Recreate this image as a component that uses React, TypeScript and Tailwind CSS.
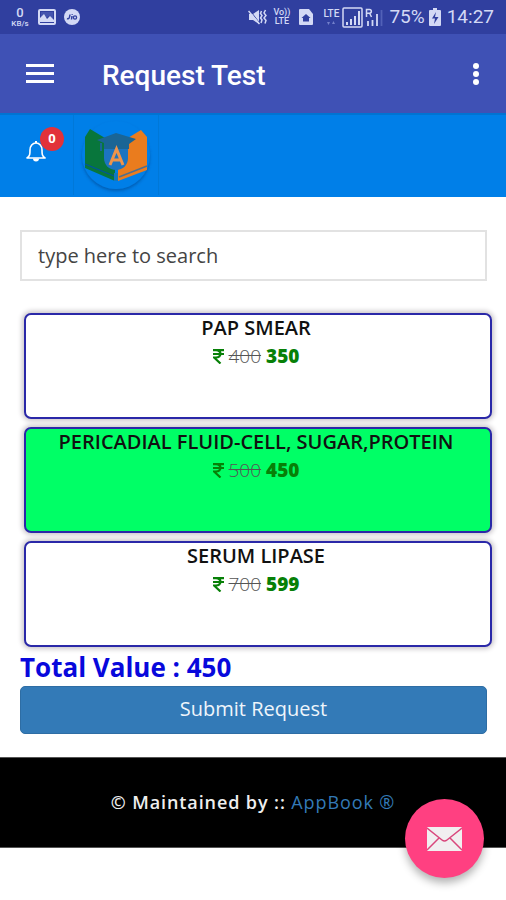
type Test = { name: string; price: number; offer: number; selected?: boolean };

const tests: Test[] = [
  { name: "PAP SMEAR", price: 400, offer: 350 },
  { name: "PERICADIAL FLUID-CELL, SUGAR,PROTEIN", price: 500, offer: 450, selected: true },
  { name: "SERUM LIPASE", price: 700, offer: 599 },
];

function StatusBar() {
  return (
    <div className="flex h-[34px] items-center justify-between bg-[#303f9f] pr-3 pl-2.5 font-['Roboto',sans-serif] text-[#d3d9f5]">
      <div className="flex items-center gap-2">
        <div className="flex w-5 flex-col items-center font-medium">
          <span className="text-[13px] leading-[14px]">0</span>
          <span className="text-[8px] leading-[8px]">KB/s</span>
        </div>
        <svg className="h-4 w-[18px]" viewBox="0 0 18 16" aria-hidden="true">
          <rect x="1" y="1" width="16" height="14" rx="1" fill="none" stroke="currentColor" strokeWidth="2" />
          <path d="M3 3h12v7l-4-3-3 2-2-3-3 6z" fill="#4454ae" />
          <path d="M2 13V9l4-4 3 5 3-3 4 4v2z" fill="currentColor" />
        </svg>
        <svg className="size-4" viewBox="0 0 16 16" aria-hidden="true">
          <circle cx="8" cy="8" r="8" fill="currentColor" />
          <path d="M3 9.500c2 1 2.500-.5 3-4M8 7l-.5 3.500M8.200 5v.8" fill="none" stroke="#303f9f" strokeWidth="1.500" />
          <circle cx="11" cy="8.500" r="1.600" fill="none" stroke="#303f9f" strokeWidth="1.300" />
        </svg>
      </div>
      <div className="flex items-center">
        <svg className="h-4 w-[19px]" viewBox="0 0 19 16" aria-hidden="true">
          <path d="M1 5h4l6-4v14l-6-4H1z" fill="currentColor" />
          <path d="M2 1.500l10 13" stroke="#303f9f" strokeWidth="1" />
          <path d="M.5 2l11 13" stroke="currentColor" strokeWidth="1.500" />
          <path d="M13.500 2l-1 2.500 1.500 2-1.500 2.500 1.500 2-1 3M17.500 1l-1.500 3 2 2.500-2 2.500 2 2.500-1 3" fill="none" stroke="currentColor" strokeWidth="1.500" />
        </svg>
        <div className="ml-1.5 flex w-[17px] flex-col items-center text-[9px] leading-[9px] font-medium">
          <span>Vo))</span>
          <span>LTE</span>
        </div>
        <svg className="ml-2 h-4 w-4" viewBox="0 0 16 16" aria-hidden="true">
          <path d="M2 0h9l4 5v10a1 1 0 0 1-1 1H2a1 1 0 0 1-1-1V1a1 1 0 0 1 1-1z" fill="currentColor" />
          <path d="M8 5l4.500 4H11v3.500H5V9H3.500z" fill="#303f9f" />
        </svg>
        <div className="ml-2 flex w-[18px] flex-col items-center font-medium">
          <span className="text-[10px] leading-3">LTE</span>
          <svg className="h-1.5 w-2.5" viewBox="0 0 10 6" aria-hidden="true">
            <path d="M1 2h3L2.500 5zM6 4h3L7.500 1z" fill="#7380cb" />
          </svg>
        </div>
        <svg className="ml-0.5 h-[21px] w-[21px]" viewBox="0 0 21 21" aria-hidden="true">
          <rect x="1" y="1" width="19" height="19" rx="1" fill="none" stroke="currentColor" strokeWidth="1.500" />
          <path d="M5 18v-3M9 18v-6M13 18V9M17 18V4" stroke="currentColor" strokeWidth="2" />
        </svg>
        <svg className="ml-0.5 h-[19px] w-[18px]" viewBox="0 0 18 19" aria-hidden="true">
          <path d="M1.500 9V1.500h3a1.800 1.800 0 0 1 0 3.700h-3M4.500 5l2 4" fill="none" stroke="currentColor" strokeWidth="1.500" />
          <path d="M3 18v-5M7.500 18v-6M12 18V6" stroke="currentColor" strokeWidth="1.800" />
          <path d="M16.500 18V2" stroke="#5261b8" strokeWidth="1.800" />
        </svg>
        <span className="ml-1.5 text-[19px] leading-6">75%</span>
        <svg className="ml-1 h-[18px] w-3" viewBox="0 0 12 18" aria-hidden="true">
          <path d="M4 0h4v2h3a1 1 0 0 1 1 1v14a1 1 0 0 1-1 1H1a1 1 0 0 1-1-1V3a1 1 0 0 1 1-1h3z" fill="currentColor" />
          <path d="M7 4L3 10.500h3L5 16l4.500-7H6z" fill="#303f9f" />
        </svg>
        <span className="ml-1.5 text-[19px] leading-6">14:27</span>
      </div>
    </div>
  );
}

function AppBar() {
  return (
    <header className="flex h-[79px] items-center bg-[#3f51b5] pt-1 pr-4 pl-[26px] text-white">
      <button type="button" aria-label="Open menu" className="flex w-[28px] flex-col gap-[5px] pb-1">
        <span className="h-[3px] w-full bg-white" />
        <span className="h-[3px] w-full bg-white" />
        <span className="h-[3px] w-full bg-white" />
      </button>
      <h1 className="ml-12 flex-1 font-['Roboto',sans-serif] text-[28px] leading-8 font-medium">Request Test</h1>
      <button type="button" aria-label="More options" className="flex w-7 flex-col items-center gap-0.5 pb-1">
        <span className="size-1.5 rounded-full bg-white" />
        <span className="size-1.5 rounded-full bg-white" />
        <span className="size-1.5 rounded-full bg-white" />
      </button>
    </header>
  );
}

function Logo() {
  return (
    <svg className="h-[80px] w-[86px]" viewBox="0 0 86 80" role="img" aria-label="AppBook">
      <defs>
        <filter id="discShadow" x="-20%" y="-20%" width="140%" height="140%">
          <feDropShadow dx="0" dy="2" stdDeviation="1.500" floodColor="#003d80" floodOpacity="0.500" />
        </filter>
      </defs>
      <path d="M.5 0v80M85.500 0v80" stroke="#0078d8" />
      <circle cx="43" cy="40" r="34" fill="#007fe8" filter="url(#discShadow)" />
      <path d="M12 22l5-8 25 15v37L12 53z" fill="#08763c" />
      <path d="M74 22l-6-7-23 14v37l29-11z" fill="#ea7c1e" />
      <path d="M12 49l29 12" stroke="#00539f" strokeWidth="1.300" />
      <path d="M74 51L46 62" stroke="#4f6f8e" strokeWidth="1.500" />
      <path d="M31 30h24v13c0 7-5 12-12 12s-12-5-12-12z" fill="#1c74c0" />
      <path d="M24 25l19-7 20 6-7 5v5H31v-6z" fill="#1a6595" />
      <path d="M28 28v8" stroke="#1a6595" strokeWidth="2" />
      <path d="M37 50l6.500-16L50 50M39 45h9" fill="none" stroke="#ef944a" strokeWidth="3" />
      <path d="M41 58h4v8h-4z" fill="#1178bd" />
    </svg>
  );
}

function BrandBar() {
  return (
    <div className="flex h-[84px] items-start border-t-2 border-[#0073d2] bg-[#007fe8] pl-[26px]">
      <button type="button" aria-label="Notifications, 0 new" className="relative mt-[25px] h-[22px] w-5 text-white">
        <svg className="h-[22px] w-5" viewBox="0 0 20 22" aria-hidden="true">
          <path d="M1 18c3-2 3-4 3-8 0-4 2.500-7 6-7s6 3 6 7c0 4 0 6 3 8z" fill="none" stroke="currentColor" strokeWidth="1.600" strokeLinejoin="round" />
          <path d="M10 1v2" stroke="currentColor" strokeWidth="2" />
          <path d="M7 18.500h6a3 3 0 0 1-6 0z" fill="currentColor" />
        </svg>
        <span className="absolute -top-[13px] left-[14px] flex size-6 items-center justify-center rounded-full bg-[#e2323a] font-['Open_Sans',sans-serif] text-[13px] font-bold">
          0
        </span>
      </button>
      <div className="ml-[27px]">
        <Logo />
      </div>
    </div>
  );
}

function TestCard({ test }: { test: Test }) {
  return (
    <button
      type="button"
      aria-pressed={Boolean(test.selected)}
      className={`flex h-[106px] w-full flex-col items-center rounded-[7px] border-2 border-[#2a28a8] pr-1 text-center shadow-[0_0_5px_2px_#c9c5c9] ${
        test.selected ? "bg-[#00ff66]" : "bg-white"
      }`}
    >
      <span className="text-[20px] leading-[26px] font-semibold text-[#111]">{test.name}</span>
      <span className="flex items-center gap-[5px] text-[19px] leading-[30px] font-bold text-[#078007]">
        <svg className="h-[15px] w-[11px]" viewBox="0 0 11 15" role="img" aria-label="Rupees">
          <path d="M0 1.200h11M0 5h11M1 1.200h2c6 0 6 7.300 0 7.300H1L7.500 14.500" fill="none" stroke="currentColor" strokeWidth="2.200" />
        </svg>
        <del className="font-light text-[#555]">{test.price}</del>
        <span className="font-extrabold">{test.offer}</span>
      </span>
    </button>
  );
}

export default function App() {
  return (
    <div className="relative min-h-screen bg-white font-['Open_Sans',sans-serif]">
      <StatusBar />
      <AppBar />
      <BrandBar />
      <main className="pt-[33px] pr-[19px] pb-[23px] pl-5">
        <input
          type="text"
          aria-label="Search tests"
          placeholder="type here to search"
          className="block h-[51px] w-full border-2 border-[#e2e2e2] px-4 text-[20px] text-[#333] outline-none placeholder:text-[#444]"
        />
        <div className="-mr-[5px] ml-1 flex flex-col gap-2 pt-8">
          {tests.map((test) => (
            <TestCard key={test.name} test={test} />
          ))}
        </div>
        <p className="pt-0.5 text-[26px] leading-[36px] font-bold text-[#0808dc]">Total Value : 450</p>
        <button type="button" className="mt-px h-12 w-full rounded-[5px] border border-[#2e6da4] bg-[#337ab7] pb-0.5 text-[20px] text-[#eef5fb]">
          Submit Request
        </button>
      </main>
      <footer className="flex h-[91px] items-center justify-center border-y border-[#555] bg-black text-[18px] font-semibold tracking-wider text-[#eee]">
        <p>
          © Maintained by ::{" "}
          <a href="#appbook" className="font-medium text-[#337ab7]">
            AppBook ®
          </a>
        </p>
      </footer>
      <button
        type="button"
        aria-label="Send a message"
        className="absolute top-[799px] right-[22px] flex size-[79px] items-center justify-center rounded-full bg-[#ff4081] shadow-[0_5px_8px_rgba(0,0,0,0.3)]"
      >
        <svg className="h-6 w-[35px]" viewBox="0 0 35 24" aria-hidden="true">
          <rect width="35" height="24" rx="1" fill="#f1eff0" />
          <path d="M0 1l15 12q2.500 2 5 0L35 1M0 23l12-12M35 23L23 11" fill="none" stroke="#d9477c" strokeWidth="1.500" />
        </svg>
      </button>
    </div>
  );
}
